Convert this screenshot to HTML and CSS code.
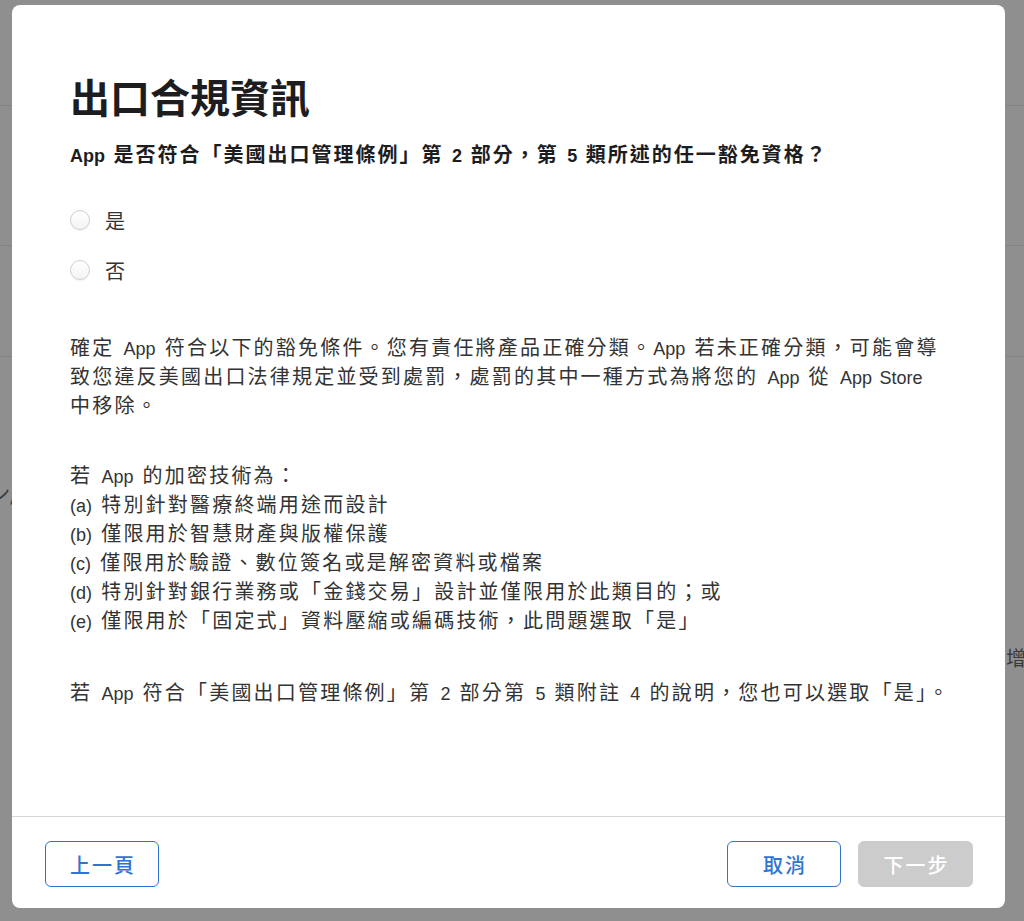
FILE: index.html
```html
<!doctype html>
<html lang="zh-Hant">
<head>
	<meta charset="utf-8">
	<meta name="viewport" content="width=device-width, initial-scale=1">
	<title>出口合規資訊</title>
	<link rel="stylesheet" href="styles.css">
</head>
<body>

	<!-- page behind the overlay -->
	<div class="page">
		<div class="page-row row-top"></div>
		<div class="page-row row-2"></div>
		<div class="page-row row-3"></div>
		<div class="page-row row-4">
			<span class="page-left">ン/</span>
		</div>
		<div class="page-row row-5">
			<span class="page-right">增</span>
		</div>
	</div>

	<section class="modal">
		<div class="modal-body">
			<h1 class="modal-title">出口合規資訊</h1>
			<p class="question"><span class="lat">App</span> 是否符合「美國出口管理條例」第 <span class="lat">2</span> 部分，第 <span class="lat">5</span> 類所述的任一豁免資格？</p>

			<div class="choices">
				<label class="choice"><input type="radio" name="exempt" value="yes"><span class="radio"></span>是</label>
				<label class="choice"><input type="radio" name="exempt" value="no"><span class="radio"></span>否</label>
			</div>

			<p class="text">確定 <span class="lat">App</span> 符合以下的豁免條件。您有責任將產品正確分類。<span class="lat">App</span> 若未正確分類，可能會導<br>致您違反美國出口法律規定並受到處罰，處罰的其中一種方式為將您的 <span class="lat">App</span> 從 <span class="lat">App Store</span><br>中移除。</p>

			<p class="text">若 <span class="lat">App</span> 的加密技術為：<br>
				<span class="lat">(a)</span> 特別針對醫療終端用途而設計<br>
				<span class="lat">(b)</span> 僅限用於智慧財產與版權保護<br>
				<span class="lat">(c)</span> 僅限用於驗證、數位簽名或是解密資料或檔案<br>
				<span class="lat">(d)</span> 特別針對銀行業務或「金錢交易」設計並僅限用於此類目的；或<br>
				<span class="lat">(e)</span> 僅限用於「固定式」資料壓縮或編碼技術，此問題選取「是」</p>

			<p class="text">若 <span class="lat">App</span> 符合「美國出口管理條例」第 <span class="lat">2</span> 部分第 <span class="lat">5</span> 類附註 <span class="lat">4</span> 的說明，您也可以選取「是」。</p>
		</div>

		<footer class="modal-footer">
			<button class="btn">上一頁</button>
			<div class="footer-right">
				<button class="btn">取消</button>
				<button class="btn btn-disabled" disabled>下一步</button>
			</div>
		</footer>
	</section>

</body>
</html>
```

FILE: styles.css
```css
:root {
	--overlay: #8f8f8f;
	--overlay-line: #838383;
	--text: #333333;
	--blue: #2f74d0;
	--radius: 8px;
	--cjk: "Noto Sans CJK TC", "Liberation Sans", sans-serif;
}

html, body {
	height: 100%;
}
body {
	margin: 0;
	background-color: var(--overlay);
	font-family: var(--cjk);
	color: var(--text);
	overflow: hidden;
}

/* page behind */
.page-row {
	border-bottom: 1px solid var(--overlay-line);
	display: flex;
	align-items: center;
}
.row-top { height: 105px; }
.row-2 { height: 139px; }
.row-3 { height: 110px; }
.row-4 { height: 270px; border-bottom: none; }
.row-5 { height: 60px; border-bottom: none; }
.page-left {
	font-size: 20px;
	color: #3a3a3a;
	margin-left: -10px;
}
.page-right {
	font-size: 20px;
	color: #3a3a3a;
	margin-left: auto;
	margin-right: -2px;
}

/* modal */
.modal {
	position: absolute;
	top: 5px;
	left: 12px;
	width: 993px;
	height: 903px;
	background-color: #ffffff;
	border-radius: var(--radius);
	display: flex;
	flex-direction: column;
	box-sizing: border-box;
}
.modal-body {
	flex: 1;
	padding: 67px 40px 0 58px;
	border-bottom: 1px solid #d6d6d6;
}
.modal-title {
	margin: 0;
	font-size: 40px;
	line-height: 48px;
	font-weight: bold;
	color: #1d1d1f;
}
.lat {
	font-family: "Liberation Sans", sans-serif;
	letter-spacing: 0;
	line-height: 1;
}
.question {
	margin: 20px 0 0;
	font-size: 20px;
	line-height: 28px;
	font-weight: bold;
	letter-spacing: 2px;
	word-spacing: 2px;
	color: #1d1d1f;
}
.question .lat {
	font-size: 18px;
}

.choices {
	margin-top: 38px;
	display: flex;
	flex-direction: column;
	gap: 22px;
}
.choice {
	display: flex;
	align-items: center;
	height: 28px;
	font-size: 20px;
	color: var(--text);
}
.choice input {
	display: none;
}
.radio {
	width: 18px;
	height: 18px;
	border-radius: 50%;
	border: 1px solid #cfcfcf;
	background: linear-gradient(#ffffff, #f4f4f4);
	box-shadow: 0 1px 1px rgba(0, 0, 0, 0.06);
	margin-right: 15px;
}

.text {
	margin: 41px 0 0;
	font-size: 20px;
	line-height: 29px;
	letter-spacing: 2.2px;
	word-spacing: 2.5px;
	white-space: nowrap;
}
.text .lat {
	font-size: 18px;
}
.choices + .text {
	margin-top: 48px;
}
.text:last-child {
	margin-top: 43px;
}

/* footer */
.modal-footer {
	height: 91px;
	padding: 24px 32px 0 33px;
	box-sizing: border-box;
	display: flex;
	justify-content: space-between;
	align-items: flex-start;
}
.footer-right {
	display: flex;
	gap: 17px;
}
.btn {
	width: 114px;
	height: 46px;
	border: 1.5px solid var(--blue);
	border-radius: 6px;
	background-color: #ffffff;
	color: var(--blue);
	font-family: var(--cjk);
	font-size: 20px;
	font-weight: 500;
	letter-spacing: 2px;
	padding: 0 0 0 2px;
}
.btn-disabled {
	width: 115px;
	border-color: #cccccc;
	background-color: #cccccc;
	color: #ffffff;
}
```
